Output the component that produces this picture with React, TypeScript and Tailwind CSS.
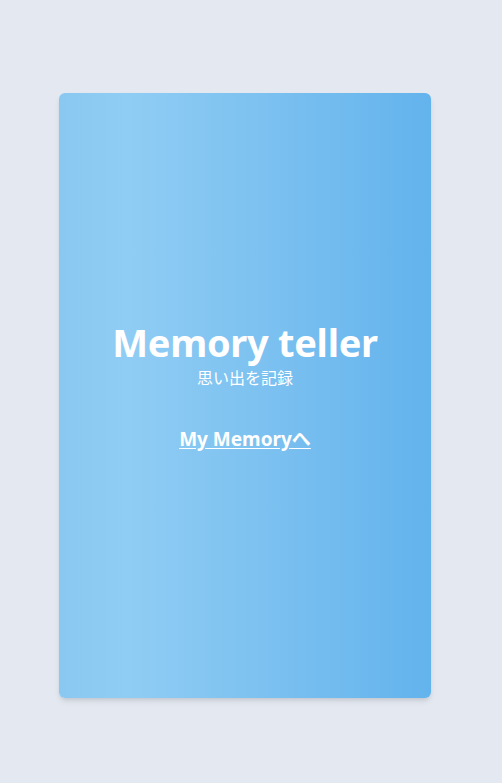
import React from 'react';

export default function App() {
  return (
    <div className="min-h-screen w-full bg-[#e3e8f1] pt-[93px] pl-[59px] pb-[85px]" style={{ fontFamily: '"Noto Sans", "Open Sans", "Noto Sans CJK JP", sans-serif' }}>
      {/* Card */}
      <div className="w-[372px] h-[605px] rounded-md shadow-md bg-[linear-gradient(to_right,#8bc8f1_0%,#90cdf4_18%,#7cc1f0_55%,#63b3ed_100%)] flex flex-col items-center justify-center text-white">
        <h1 className="text-[38px] leading-[40px] font-bold tracking-[-0.3px] mt-[-18px]">Memory teller</h1>
        <p className="text-[16px] leading-[18px] mt-[6px]" style={{ fontFamily: '"Noto Sans CJK JP", sans-serif' }}>思い出を記録</p>
        <a href="#" className="mt-[41px] text-[19px] leading-[24px] font-bold underline underline-offset-2">
          My Memoryへ
        </a>
      </div>
    </div>
  );
}
